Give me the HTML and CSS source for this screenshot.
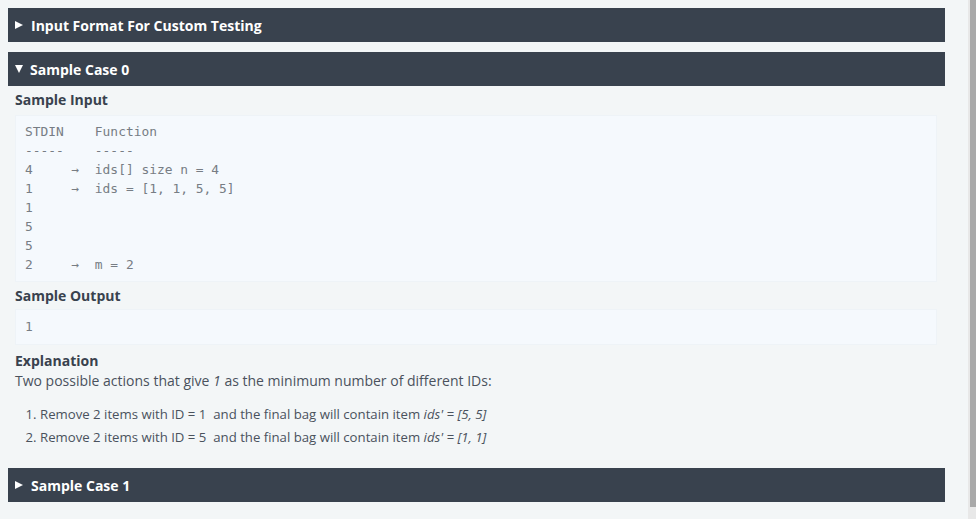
FILE: index.html
```html
<!DOCTYPE html>
<html>
<head>
<meta charset="utf-8">
<link rel="stylesheet" href="styles.css">
</head>
<body>
<div class="page">
  <div class="bar"><span class="tri tri-right"></span><span>Input Format For Custom Testing</span></div>

  <div class="bar bar-open"><span class="tri tri-down"></span><span>Sample Case 0</span></div>
  <div class="case-body">
    <h3 class="sub">Sample Input</h3>
    <pre class="code">STDIN    Function
-----    -----
4     →  ids[] size n = 4
1     →  ids = [1, 1, 5, 5]
1
5
5
2     →  m = 2</pre>
    <h3 class="sub sub-out">Sample Output</h3>
    <pre class="code code-out">1</pre>
    <h3 class="sub sub-expl">Explanation</h3>
    <p class="text">Two possible actions that give <em>1</em> as the minimum number of different IDs:</p>
    <ol class="list">
      <li>Remove 2 items with ID = 1&nbsp; and the final bag will contain item <em>ids' = [5, 5]</em></li>
      <li>Remove 2 items with ID = 5&nbsp; and the final bag will contain item <em>ids' = [1, 1]</em></li>
    </ol>
  </div>

  <div class="bar bar-last"><span class="tri tri-right"></span><span>Sample Case 1</span></div>
</div>
<div class="scrollbar"><div class="thumb"></div><div class="arrow"></div></div>
</body>
</html>
```
FILE: styles.css
```css
html, body {
  margin: 0;
  padding: 0;
  height: 519px;
  overflow: hidden;
}
body {
  display: flex;
  background: #f3f6f7;
  font-family: "Open Sans", "Noto Sans", sans-serif;
  color: #39424e;
}
.page {
  flex: 1 1 auto;
  min-width: 0;
  padding: 8px 0 0 8px;
}
.bar {
  width: 937px;
  height: 34px;
  box-sizing: border-box;
  background: #39424e;
  color: #ffffff;
  display: flex;
  align-items: center;
  padding-left: 7px;
  font-size: 14px;
  font-weight: 700;
}
.bar-open {
  margin-top: 10px;
}
.bar-last {
  margin-top: 19px;
}
.tri {
  display: inline-block;
  width: 0;
  height: 0;
  margin-right: 8px;
}
.tri-right {
  border-top: 4.5px solid transparent;
  border-bottom: 4.5px solid transparent;
  border-left: 8px solid #ffffff;
}
.tri-down {
  border-left: 4.5px solid transparent;
  border-right: 4.5px solid transparent;
  border-top: 8px solid #ffffff;
  margin-right: 7px;
}
.case-body {
  width: 922px;
  padding-left: 7px;
}
.sub {
  margin: 4px 0 5px 0;
  font-size: 14px;
  line-height: 20px;
  font-weight: 700;
  color: #39424e;
}
.sub-out {
  margin-top: 4px;
  margin-bottom: 3px;
}
.sub-expl {
  margin-top: 6px;
  margin-bottom: 0;
}
.code {
  margin: 0;
  background: #f5f9fd;
  border: 1px solid #eef3f7;
  padding: 6px 10px 7px 9px;
  font-family: "DejaVu Sans Mono", "Liberation Mono", monospace;
  font-size: 12.9px;
  line-height: 19px;
  color: #777d84;
}
.code-out {
  padding-top: 7px;
  padding-bottom: 8px;
}
.text {
  margin: 0;
  font-size: 14px;
  line-height: 20px;
  color: #4a525d;
}
.list {
  margin: 12px 0 0 0;
  padding-left: 25px;
  font-size: 13.2px;
  line-height: 23px;
  color: #4a525d;
}
.scrollbar {
  flex: 0 0 8px;
  width: 8px;
  height: 519px;
  display: flex;
  flex-direction: column;
  background: #e8e8e8;
}
.thumb {
  flex: 1 1 auto;
  margin-left: 2px;
  background: #a9a9a9;
}
.arrow {
  flex: 0 0 12px;
  background: #e8e8e8;
}
```
